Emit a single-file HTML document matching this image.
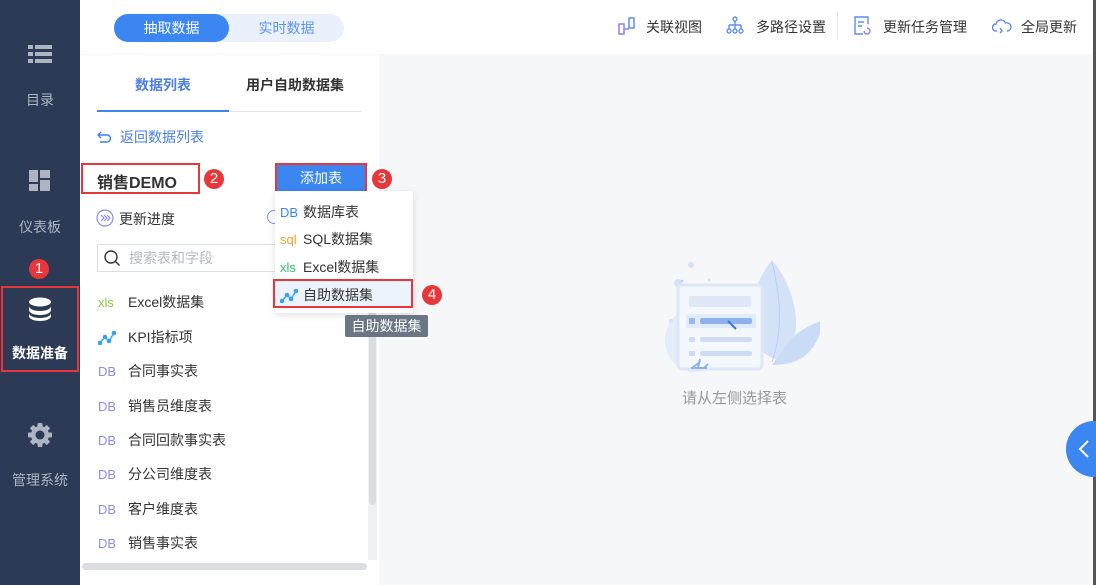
<!DOCTYPE html>
<html><head><meta charset="utf-8"><style>
*{margin:0;padding:0;box-sizing:border-box}
body{width:1096px;height:585px;overflow:hidden;background:#fff;font-family:"Liberation Sans","Noto Sans CJK SC",sans-serif;position:relative;font-size:14px;color:#333}
.abs{position:absolute}
#side{left:0;top:0;width:80px;height:585px;background:#2c3a55}
.nav{position:absolute;left:0;width:80px;text-align:center;color:#aeb5c2;font-size:14px}
.red{border:2px solid #e8373a}
.badge{position:absolute;width:20px;height:20px;border-radius:50%;background:#e8373a;color:#fff;font-size:15px;text-align:center;line-height:20px}
#right{left:379px;top:54px;width:714px;height:531px;background:#f6f7f9}
.tb{position:absolute;top:17px;font-size:14px;color:#333}
.list{position:absolute;left:98px;font-size:14px;color:#333}
.db{display:inline-block;width:30px;font-size:13px;color:#8a8cf0;letter-spacing:0px}
</style></head><body>
<div id="side" class="abs">
 <svg class="abs" style="left:28px;top:44px" width="24" height="20"><rect x="0" y="1" width="5" height="4" fill="#aeb5c2"/><rect x="7" y="1" width="17" height="4" fill="#aeb5c2"/><rect x="0" y="8" width="5" height="4" fill="#aeb5c2"/><rect x="7" y="8" width="17" height="4" fill="#aeb5c2"/><rect x="0" y="15" width="5" height="4" fill="#aeb5c2"/><rect x="7" y="15" width="17" height="4" fill="#aeb5c2"/></svg>
 <div class="nav" style="top:90px">目录</div>
 <svg class="abs" style="left:29px;top:170px" width="22" height="22"><rect x="0" y="0" width="9" height="12" fill="#aeb5c2"/><rect x="11" y="0" width="10" height="8" fill="#aeb5c2"/><rect x="0" y="14" width="9" height="7" fill="#aeb5c2"/><rect x="11" y="10" width="10" height="11" fill="#aeb5c2"/></svg>
 <div class="nav" style="top:217px">仪表板</div>
 <div class="badge" style="left:29px;top:259px">1</div>
 <div class="abs red" style="left:1px;top:286px;width:78px;height:86px"></div>
 <svg class="abs" style="left:28px;top:297px" width="24" height="24"><ellipse cx="12" cy="5" rx="11" ry="4.5" fill="#fff"/><path d="M1 9c0 3 5 5 11 5s11-2 11-5v4c0 3-5 5-11 5S1 16 1 13z" fill="#fff"/><path d="M1 16c0 3 5 5 11 5s11-2 11-5v3c0 3-5 5-11 5S1 22 1 19z" fill="#fff"/></svg>
 <div class="nav" style="top:343px;color:#fff;font-weight:bold">数据准备</div>
 <svg class="abs" style="left:27px;top:422px" width="26" height="26" viewBox="0 0 26 26"><g fill="#aeb5c2"><circle cx="13" cy="13" r="9"/><rect x="10.5" y="1" width="5" height="24" rx="1"/><rect x="10.5" y="1" width="5" height="24" rx="1" transform="rotate(45 13 13)"/><rect x="10.5" y="1" width="5" height="24" rx="1" transform="rotate(90 13 13)"/><rect x="10.5" y="1" width="5" height="24" rx="1" transform="rotate(135 13 13)"/></g><circle cx="13" cy="13" r="4.5" fill="#2c3a55"/></svg>
 <div class="nav" style="top:470px">管理系统</div>
</div>
<div class="abs" style="left:80px;top:0;width:1016px;height:54px;background:#fff;box-shadow:0 1px 2px rgba(0,0,0,.04)"></div>
<div class="abs" style="left:114px;top:14px;width:230px;height:28px;border-radius:14px;background:#eaf1fd"></div>
<div class="abs" style="left:114px;top:14px;width:115px;height:28px;border-radius:14px;background:#3b86f0;color:#fff;text-align:center;line-height:28px;font-size:14px">抽取数据</div>
<div class="abs" style="left:229px;top:14px;width:115px;height:28px;color:#5c95f0;text-align:center;line-height:28px;font-size:14px">实时数据</div>

<svg class="abs" style="left:618px;top:17px" width="18" height="18"><rect x="1" y="7" width="5" height="10" fill="none" stroke="#9a7af0" stroke-width="1.5"/><rect x="11" y="1" width="5" height="10" fill="none" stroke="#5c8ef0" stroke-width="1.5"/><path d="M6 12h5" stroke="#7a8af0" stroke-width="1.5"/></svg>
<div class="tb" style="left:646px">关联视图</div>
<svg class="abs" style="left:726px;top:16px" width="18" height="18" fill="none" stroke="#5c8ef0" stroke-width="1.4"><circle cx="9" cy="3" r="2"/><path d="M9 5v4M3 9h12M3 9v4M9 9v4M15 9v4"/><circle cx="3" cy="15" r="2"/><circle cx="9" cy="15" r="2"/><circle cx="15" cy="15" r="2"/></svg>
<div class="tb" style="left:756px">多路径设置</div>
<div class="abs" style="left:837px;top:12px;width:1px;height:28px;background:#e6e8ec"></div>
<svg class="abs" style="left:854px;top:16px" width="18" height="20" fill="none" stroke="#5c8ef0" stroke-width="1.4"><path d="M14 8V1H1v17h8"/><path d="M4 6h6M4 10h4"/><path d="M10 15a3 3 0 1 0 3-3" stroke="#9a7af0"/></svg>
<div class="tb" style="left:883px">更新任务管理</div>
<svg class="abs" style="left:992px;top:18px" width="20" height="16" fill="none" stroke="#5c8ef0" stroke-width="1.4"><path d="M5 13H4a3.5 3.5 0 0 1 0-7 5 5 0 0 1 9.5-1A4 4 0 0 1 16 13h-1"/><path d="M8 10l2 3-2 2" /></svg>
<div class="tb" style="left:1021px">全局更新</div>

<div id="right" class="abs"></div>
<div class="abs" style="left:1093px;top:0;width:3px;height:585px;background:#555"></div>

<div class="abs" style="left:97px;top:76px;width:132px;text-align:center;color:#4b7fe0;font-weight:bold;font-size:14px;line-height:18px">数据列表</div>
<div class="abs" style="left:229px;top:76px;width:132px;text-align:center;color:#333;font-weight:bold;font-size:14px;line-height:18px">用户自助数据集</div>
<div class="abs" style="left:97px;top:111px;width:264px;height:1px;background:#e4e6ea"></div>
<div class="abs" style="left:97px;top:110px;width:132px;height:2px;background:#3b86f0"></div>
<svg class="abs" style="left:97px;top:130px" width="16" height="14" fill="none" stroke="#3b86f0" stroke-width="1.4"><path d="M4 2L1 5l3 3M1 5h9a3.5 3.5 0 0 1 0 7H3"/></svg>
<div class="abs" style="left:120px;top:127px;color:#4b7fe0;font-size:14px">返回数据列表</div>

<div class="abs red" style="left:81px;top:163px;width:119px;height:31px"></div>
<div class="abs" style="left:97px;top:169px;font-weight:bold;font-size:16px;color:#333">销售DEMO</div>
<div class="badge" style="left:204px;top:169px">2</div>
<div class="abs red" style="left:275px;top:163px;width:92px;height:31px;background:#3b86f0;color:#fff;text-align:center;line-height:27px;font-size:14px">添加表</div>
<div class="badge" style="left:372px;top:169px">3</div>

<svg class="abs" style="left:96px;top:209px" width="18" height="18" fill="none" stroke="#8a8cf0" stroke-width="1.2"><circle cx="9" cy="9" r="8"/><path d="M5 6l3 3-3 3M8 6l3 3-3 3M11 6l3 3-3 3"/></svg>
<div class="abs" style="left:119px;top:209px;font-size:14px">更新进度</div>
<div class="abs" style="left:267px;top:210px;width:14px;height:14px;border:1.4px solid #8a8cf0;border-radius:50%"></div>
<div class="abs" style="left:97px;top:244px;width:200px;height:28px;border:1px solid #dcdfe6;background:#fff"></div>
<svg class="abs" style="left:103px;top:249px" width="18" height="18" fill="none" stroke="#333" stroke-width="1.4"><circle cx="8" cy="8" r="6"/><path d="M12.5 12.5l4 4"/></svg>
<div class="abs" style="left:129px;top:248px;color:#b4b8c0;font-size:14px">搜索表和字段</div>

<div class="list" style="top:292px"><span class="db" style="color:#8acc3c">xls</span>Excel数据集</div>
<div class="list" style="top:327px"><svg style="vertical-align:-3px;margin-right:12px" width="18" height="14" fill="#3aa0f0" stroke="#3aa0f0"><path d="M2 12l5-6 4 4 5-8" fill="none" stroke-width="1.4"/><circle cx="2" cy="12" r="1.8"/><circle cx="7" cy="6" r="1.8"/><circle cx="11" cy="10" r="1.8"/><circle cx="16" cy="2" r="1.8"/></svg>KPI指标项</div>
<div class="list" style="top:361px"><span class="db">DB</span>合同事实表</div>
<div class="list" style="top:396px"><span class="db">DB</span>销售员维度表</div>
<div class="list" style="top:430px"><span class="db">DB</span>合同回款事实表</div>
<div class="list" style="top:464px"><span class="db">DB</span>分公司维度表</div>
<div class="list" style="top:499px"><span class="db">DB</span>客户维度表</div>
<div class="list" style="top:533px"><span class="db">DB</span>销售事实表</div>
<div class="abs" style="left:368px;top:300px;width:9px;height:260px;background:#f0f1f3"></div>
<div class="abs" style="left:369px;top:300px;width:7px;height:205px;background:#dcdde0;border-radius:4px"></div>
<div class="abs" style="left:82px;top:563px;width:285px;height:7px;background:#dcdde0;border-radius:4px"></div>

<div class="abs" style="left:275px;top:191px;width:138px;height:122px;background:#fff;box-shadow:0 2px 8px rgba(0,0,0,.12)"></div>
<div class="abs" style="left:280px;top:202px;font-size:14px"><span class="db" style="color:#3b86f0;width:23px">DB</span>数据库表</div>
<div class="abs" style="left:280px;top:229px;font-size:14px"><span class="db" style="color:#f0a030;width:23px">sql</span>SQL数据集</div>
<div class="abs" style="left:280px;top:257px;font-size:14px"><span class="db" style="color:#2cc070;width:23px">xls</span>Excel数据集</div>
<div class="abs red" style="left:273px;top:279px;width:140px;height:29px;background:#ecf3fd"></div>
<div class="abs" style="left:280px;top:285px;font-size:14px"><svg style="vertical-align:-3px;margin-right:5px" width="18" height="14" fill="#3aa0f0" stroke="#3aa0f0"><path d="M2 12l5-6 4 4 5-8" fill="none" stroke-width="1.4"/><circle cx="2" cy="12" r="1.8"/><circle cx="7" cy="6" r="1.8"/><circle cx="11" cy="10" r="1.8"/><circle cx="16" cy="2" r="1.8"/></svg>自助数据集</div>
<div class="badge" style="left:422px;top:285px">4</div>
<div class="abs" style="left:345px;top:315px;width:83px;height:22px;background:#6b7584;color:#fff;font-size:14px;line-height:22px;text-align:center;border-radius:2px">自助数据集</div>

<svg class="abs" style="left:660px;top:250px" width="160" height="125">
 <ellipse cx="35" cy="90" rx="30" ry="32" fill="#e4ecf8"/>
 <path d="M120 110c-35-5-40-60-8-100 25 30 35 80 8 100z" fill="#d4e2f7"/>
 <path d="M112 115c15-20 20-35 52-45-8 35-25 45-52 45z" fill="#c9dbf5"/>
 <path d="M112 12c10 40 10 70 0 100" stroke="#b8cff2" fill="none"/>
 <circle cx="31" cy="15" r="3" fill="#d4e2f7"/><circle cx="18" cy="33" r="4" fill="#d4e2f7"/><circle cx="22" cy="31" r="1.3" fill="#b8cff2"/><circle cx="49" cy="30" r="1.5" fill="#d4e2f7"/><circle cx="11" cy="71" r="2" fill="#d4e2f7"/>
 <rect x="18" y="35" width="84" height="84" rx="4" fill="#f4f7fc" stroke="#dde7f7" stroke-width="3"/>
 <rect x="29" y="46" width="62" height="11" rx="2" fill="#dde7f7"/>
 <rect x="26" y="64" width="70" height="14" rx="2" fill="#e2ebf9"/>
 <rect x="29" y="68" width="6" height="6" fill="#9ab9ee"/><rect x="40" y="68" width="52" height="6" rx="2" fill="#8fb1ec"/>
 <path d="M68 71l8 8" stroke="#3b76d8" stroke-width="2"/>
 <rect x="29" y="87" width="6" height="5" fill="#cddcf4"/><rect x="40" y="87" width="52" height="5" rx="2" fill="#cddcf4"/>
 <rect x="29" y="101" width="6" height="5" fill="#cddcf4"/><rect x="40" y="101" width="52" height="5" rx="2" fill="#cddcf4"/>
 <path d="M32 118l8-6M38 118l2-9M44 118l4-4M31 118h16" stroke="#8fb1ec" stroke-width="2"/>
</svg>
<div class="abs" style="left:682px;top:387px;color:#999;font-size:15px">请从左侧选择表</div>
<div class="abs" style="left:1066px;top:421px;width:56px;height:56px;border-radius:50%;background:#3b86f0"></div>
<svg class="abs" style="left:1077px;top:439px" width="14" height="20" fill="none" stroke="#fff" stroke-width="2"><path d="M11 2L3 10l8 8"/></svg>
</body></html>
